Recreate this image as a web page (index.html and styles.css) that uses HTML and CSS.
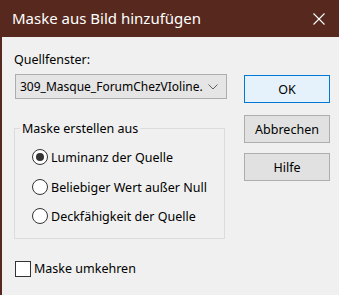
FILE: index.html
```html
<!DOCTYPE html>
<html lang="de">
<head>
  <meta charset="UTF-8" />
  <meta name="viewport" content="width=device-width, initial-scale=1.0" />
  <title>Maske aus Bild hinzufügen</title>
  <link rel="stylesheet" href="styles.css">
</head>
<body>
  <div class="dialog">
    <!-- Title bar -->
    <div class="titlebar">
      <span class="title">Maske aus Bild hinzufügen</span>
      <svg class="close" width="12" height="12" viewBox="0 0 12 12">
        <path d="M0.5 0.5 L11.5 11.5 M11.5 0.5 L0.5 11.5" stroke="#fff" stroke-width="1.1" fill="none"/>
      </svg>
    </div>
    <div class="content">
      <div class="left">
        <div class="label">Quellfenster:</div>
        <div class="combo">
          <span class="combo-text">309_Masque_ForumChezVIoline.</span>
          <svg class="chevron" width="10" height="6" viewBox="0 0 10 6">
            <path d="M0.5 0.5 L5 5 L9.5 0.5" stroke="#606060" stroke-width="1" fill="none"/>
          </svg>
        </div>
        <fieldset class="group">
          <legend>Maske erstellen aus</legend>
          <div class="radio-row"><span class="radio checked"></span>Luminanz der Quelle</div>
          <div class="radio-row"><span class="radio"></span>Beliebiger Wert außer Null</div>
          <div class="radio-row"><span class="radio"></span>Deckfähigkeit der Quelle</div>
        </fieldset>
        <div class="check-row"><span class="checkbox"></span>Maske umkehren</div>
      </div>
      <div class="buttons">
        <div class="btn default">OK</div>
        <div class="btn">Abbrechen</div>
        <div class="btn">Hilfe</div>
      </div>
    </div>
  </div>
</body>
</html>
```

FILE: styles.css
```css
body {
  margin: 0;
  background: #f0f0f0;
  font-family: 'Noto Sans', 'Open Sans', sans-serif;
  font-size: 12px;
  color: #000;
  overflow: hidden;
}
.dialog {
  width: 337px;
  height: 295px;
  border-left: 2px solid #57291e;
  display: flex;
  flex-direction: column;
}
/* Title bar */
.titlebar {
  height: 37px;
  margin-left: -2px;
  padding-left: 12px;
  padding-right: 14px;
  background: #57291e;
  display: flex;
  align-items: center;
  justify-content: space-between;
}
.title {
  color: #fff;
  font-size: 15px;
  margin-top: -1px;
}
/* Body */
.content {
  flex: 1;
  display: flex;
  padding: 15px 0 0 13px;
}
.left {
  width: 212px;
}
.label {
  height: 16px;
  line-height: 16px;
  margin-left: -1px;
  font-size: 12.5px;
}
.combo {
  margin-top: 6px;
  height: 25px;
  box-sizing: border-box;
  border: 1px solid #adadad;
  background: #e5e5e5;
  display: flex;
  align-items: center;
  justify-content: space-between;
  padding: 0 8px 0 4px;
}
.combo-text {
  font-size: 12px;
}
/* Group box */
.group {
  margin: 21px 0 0 -1px;
  padding: 5px 0 0 17px;
  width: 211px;
  height: 119px;
  box-sizing: border-box;
  border: 1px solid #dcdcdc;
}
.group legend {
  padding: 0 2px;
  margin-left: -12px;
  font-size: 12.5px;
}
.radio-row {
  height: 30px;
  display: flex;
  align-items: center;
  gap: 3px;
  font-size: 12.5px;
}
.radio-row:last-child {
  height: 28px;
}
.radio {
  width: 14px;
  height: 14px;
  border: 1px solid #333;
  border-radius: 50%;
  background: #fff;
  display: flex;
  align-items: center;
  justify-content: center;
}
.radio.checked::after {
  content: "";
  width: 8px;
  height: 8px;
  border-radius: 50%;
  background: #333;
}
.check-row {
  margin-top: 21px;
  display: flex;
  align-items: center;
  gap: 3px;
  font-size: 12.5px;
}
.checkbox {
  width: 14px;
  height: 14px;
  border: 1px solid #333;
  background: #fff;
}
/* Buttons */
.buttons {
  margin-left: 17px;
  display: flex;
  flex-direction: column;
}
.btn {
  width: 86px;
  height: 28px;
  box-sizing: border-box;
  border: 1px solid #adadad;
  background: #e1e1e1;
  display: flex;
  align-items: center;
  justify-content: center;
  margin-top: 12px;
  font-size: 12.5px;
}
.btn.default {
  margin-top: 23px;
  border: 1px solid #0078d7;
  background: #e5f1fb;
}
.btn:last-child {
  margin-top: 10px;
}
```
